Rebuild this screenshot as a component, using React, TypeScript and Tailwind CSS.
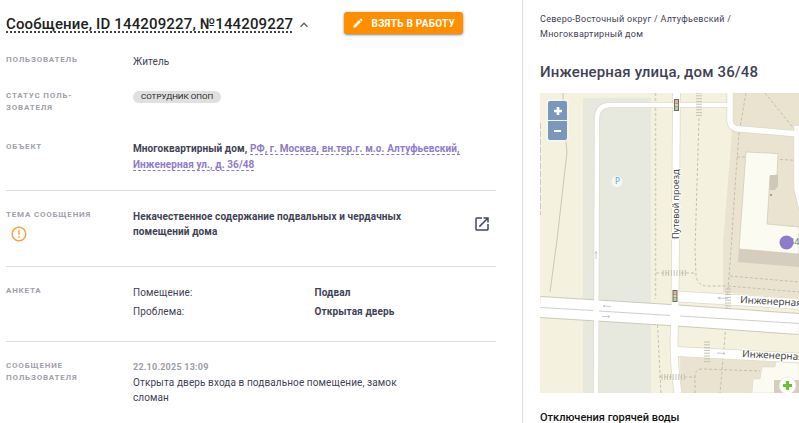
import React from 'react';
import { MdEdit, MdErrorOutline, MdKeyboardArrowUp, MdOpenInNew } from 'react-icons/md';

interface RowProps {
  label: React.ReactNode;
  className?: string;
  children: React.ReactNode;
}

const Row: React.FC<RowProps> = ({ label, className = '', children }) => (
  <div className={`grid grid-cols-[127px_1fr] ${className}`}>
    <dt className="text-[8px] leading-3 font-bold tracking-widest text-[#9fa1aa] uppercase">{label}</dt>
    <dd>{children}</dd>
  </div>
);

const answers = [
  { name: 'Помещение:', value: 'Подвал' },
  { name: 'Проблема:', value: 'Открытая дверь' }
];

// Pedestrian crossings: start point, number of stripes, direction
const crossings = [
  { x: 159, y: 0, count: 9, vertical: true },
  { x: 188, y: 196, count: 8, vertical: true },
  { x: 167, y: 249, count: 8, vertical: true },
  { x: 123, y: 180, count: 9, vertical: false },
  { x: 122, y: 284, count: 9, vertical: false }
];

const TrafficLight: React.FC<{ x: number; y: number }> = ({ x, y }) => (
  <g transform={`translate(${x} ${y})`}>
    <rect x="-2.5" y="-6" width="5" height="12" fill="#6f6b62" />
    <rect x="-1.5" y="-5" width="3" height="3" fill="#e0aea2" />
    <rect x="-1.5" y="-1.5" width="3" height="3" fill="#e3d9a0" />
    <rect x="-1.5" y="2" width="3" height="3" fill="#b2cea2" />
  </g>
);

const MapView: React.FC = () => (
  <svg viewBox="0 0 259 300" preserveAspectRatio="xMinYMin slice" className="block h-full w-full">
    <rect width="259" height="300" fill="#f4f1de" />
    <rect x="43" y="5" width="68" height="295" fill="#e8e9de" />

    {/* Yards */}
    <path d="M191 0H259V206L183 199V150L192 38Z" fill="#e9e3d0" />
    <path d="M140 264L259 270V300H141Z" fill="#e9e3d0" />

    {/* Buildings */}
    <path d="M199 156L259 161V174L198 169Z" fill="#d5cdbe" />
    <path
      d="M206 59L238 60.500L237 82L230 83L227 131L259 134V161L199 156Z"
      fill="#fcfbf2"
      stroke="#cfc8b8"
      strokeWidth="0.7"
    />
    <path d="M230 82H238V93L235 97H229.500Z" fill="#cfc7b8" />
    <circle cx="231" cy="102" r="1" fill="#8c877c" />
    <path d="M236 268L259 270V300H212L213 286H220L222 274H235Z" fill="#fcfbf2" stroke="#ddd6c6" strokeWidth="0.6" />
    <path d="M234 287H259V300H234Z" fill="#d5cdbe" />

    {/* Footpaths */}
    <path d="M23 0L24 30L27 59L17 147L10 199" fill="none" stroke="#cbc8bb" strokeWidth="1" />
    <path d="M0 30V122" stroke="#b9bfcb" strokeWidth="1.500" strokeDasharray="6 2" />
    <path d="M115.500 0V206" stroke="#d3d0be" strokeWidth="1.500" strokeDasharray="3 2" />
    <g fill="none" stroke="#bab5a5" strokeWidth="0.8" strokeDasharray="3 2">
      <path d="M117.500 232L121 300" />
      <path d="M159 25L155 157L156 182Q157 193 168 193L188 193L259 199" />
      <path d="M206 0L199 40L195 94L191 157L188 197L185 244L180 300" />
      <path d="M190 183L259 189" />
      <path d="M225 0L255 37" />
      <path d="M197 64H205M240 66.500L259 67.500" />
      <path d="M116 180H156M119 284H155" />
      <path d="M155 300V284Q155 276 162 276L220 278" />
    </g>

    {/* Roads: edge first, then the surface */}
    <g fill="none" stroke="#dedacb">
      <path d="M56 300L57 26Q57 12 71 12H190" strokeWidth="6" />
      <path d="M136.500 0L135 215L134 248Q134 275 138 300" strokeWidth="8.500" />
      <path d="M190 0V25Q189 36 200 36L259 41M257 33V96L262 116" strokeWidth="7" />
      <path d="M138 203.500L259 211" strokeWidth="11.500" />
      <path d="M137 258.500L259 265" strokeWidth="10.500" />
      <path d="M0 214L130 222L259 231" stroke="#cdcabd" strokeWidth="22" />
    </g>
    <g fill="none" stroke="#fff">
      <path d="M56 300L57 26Q57 12 71 12H190" strokeWidth="4.500" />
      <path d="M138 203.500L259 211" strokeWidth="10" />
      <path d="M137 258.500L259 265" strokeWidth="9" />
      <path d="M0 214L130 222L259 231" strokeWidth="20" />
      <path d="M136.500 0L135 215L134 248Q134 275 138 300" strokeWidth="7" />
      <path d="M190 0V25Q189 36 200 36L259 41M257 33V96L262 116" strokeWidth="5.500" />
    </g>
    <path d="M0 214.500L53 217.500M59 218L130 222.500M140 223L259 230.500" fill="none" stroke="#cfcfcf" strokeWidth="1" />

    {/* Crossings */}
    {crossings.map(({ x, y, count, vertical }) => (
      <g key={`${x}-${y}`} stroke="#c6c2b6" strokeWidth="1">
        {Array.from({ length: count }, (_, i) =>
          vertical ? (
            <path key={i} d={`M${x - 3} ${y + i * 2.8}h6`} />
          ) : (
            <path key={i} d={`M${x + i * 2.8} ${y - 3}v6`} />
          )
        )}
      </g>
    ))}

    {/* One-way arrows */}
    <g fill="none" stroke="#b9c0da" strokeWidth="0.8">
      <path d="M71 213.500L63 213M65 212L63 213L65 214" />
      <path d="M62 223.500H70M68 222.500L70 223.500L68 224.500" />
      <path d="M56 166V158.500M55 160.500L56 158.500L57 160.500" />
      <path d="M188 205.500L178 205M180.500 204L178 205L180.500 206" />
      <path d="M177 260L185 260.500M183 259.500L185 260.500L183 261.500" />
    </g>

    <TrafficLight x={136.5} y={12} />
    <TrafficLight x={135} y={203} />

    <circle cx="77" cy="88.500" r="5.500" fill="#f6f7f2" />
    <text x="77.500" y="91" textAnchor="middle" fontSize="8" fill="#5aa5dc" fontFamily="Noto Sans, sans-serif">
      P
    </text>

    {/* Street names */}
    <g fontSize="10" fill="#444" stroke="#fff" strokeWidth="2" paintOrder="stroke" fontFamily="Noto Sans, sans-serif">
      <text transform="translate(139 146) rotate(-90)" fontSize="9">
        Путевой проезд
      </text>
      <text transform="translate(200 210) rotate(3)">Инженерная</text>
      <text transform="translate(202 264) rotate(3)">Инженерная</text>
    </g>
    <text x="249" y="152" fontSize="9" fill="#777" fontFamily="Noto Sans, sans-serif">
      34
    </text>

    <circle cx="246.500" cy="149.500" r="7" fill="#8f7acb" />
    <circle cx="247.500" cy="292.500" r="8.500" fill="#fff" stroke="#d9d6cc" strokeWidth="0.5" />
    <path d="M247.500 288V297M243 292.500H252" stroke="#6cc22f" strokeWidth="3.200" />
  </svg>
);

const MessageCard: React.FC = () => (
  <section className="border-r border-[#dedede] pt-3 pr-[26px] pl-1.5">
    <header className="flex items-start">
      <h1 className="text-[15px] leading-6 font-medium tracking-[0.01em] whitespace-nowrap text-[#212121]">
        <span className="underline decoration-[#444] decoration-dotted decoration-2 underline-offset-2">
          Сообщение, ID 144209227, №144209227
        </span>
      </h1>
      <button type="button" aria-label="Свернуть" className="mt-[5px] ml-[3px] text-[#666]">
        <MdKeyboardArrowUp size={16} />
      </button>
      <button
        type="button"
        className="mr-[33px] ml-auto flex h-[22px] items-center gap-2 rounded-[3px] bg-[#ff8f00] px-2 text-[10px] font-bold tracking-wide whitespace-nowrap text-white uppercase shadow-sm shadow-black/40"
      >
        <MdEdit size={12} />
        Взять в работу
      </button>
    </header>

    <dl className="mt-[18px] text-[10px] leading-[15px] tracking-[0.01em] text-[#3f4254]">
      <Row label="Пользователь">Житель</Row>
      <Row
        label={
          <>
            Статус поль-
            <br />
            зователя
          </>
        }
        className="mt-[21px]"
      >
        <span className="mt-px block w-fit rounded-full bg-[#e0e0e0] px-2 text-[8px] leading-3 tracking-normal text-[#212121] uppercase">
          Сотрудник ОПОП
        </span>
      </Row>
      <Row label="Объект" className="mt-[27px] pb-[17px]">
        <p className="leading-4 font-bold">
          Многоквартирный дом,{' '}
          <a href="#map" className="border-b border-dashed border-[#8f7acb] text-[#8f7acb]">
            РФ, г. Москва, вн.тер.г. м.о. Алтуфьевский, Инженерная ул., д. 36/48
          </a>
        </p>
      </Row>

      <Row
        label={
          <>
            Тема сообщения
            <MdErrorOutline size={18} className="mt-1 ml-1 text-[#ff9f40]" />
          </>
        }
        className="border-t border-[#dedede] pt-[18px] pb-[23px]"
      >
        <div className="flex items-center justify-between pr-[5px]">
          <p className="max-w-[290px] font-bold">Некачественное содержание подвальных и чердачных помещений дома</p>
          <button type="button" aria-label="Открыть" className="text-[#3f4a5e]">
            <MdOpenInNew size={18} />
          </button>
        </div>
      </Row>

      <Row label="Анкета" className="border-t border-[#dedede] pt-[18px] pb-[18px]">
        {answers.map(item => (
          <div key={item.name} className="grid grid-cols-2 pb-1">
            <span>{item.name}</span>
            <span className="font-bold">{item.value}</span>
          </div>
        ))}
      </Row>

      <Row
        label={
          <>
            Сообщение
            <br />
            пользователя
          </>
        }
        className="border-t border-[#dedede] pt-[18px]"
      >
        <time className="block text-[9px] font-bold tracking-wide text-[#9a9da6]">22.10.2025 13:09</time>
        <p className="max-w-[290px]">Открыта дверь входа в подвальное помещение, замок сломан</p>
      </Row>
    </dl>
  </section>
);

const ObjectPanel: React.FC = () => (
  <aside className="min-w-0 pt-3 pl-[17px]">
    <nav className="max-w-[210px] text-[9px] leading-[15px] tracking-[0.03em] text-[#3f4254]">
      Северо-Восточный округ / Алтуфьевский / Многоквартирный дом
    </nav>
    <h2 className="mt-5 text-[15px] leading-5 font-medium tracking-[0.01em] text-[#3f4254]">Инженерная улица, дом 36/48</h2>

    <div id="map" className="relative mt-[11px] h-[300px] overflow-hidden">
      <MapView />
      <div className="absolute top-1.5 left-1.5 flex flex-col gap-px rounded bg-white/40 p-0.5 text-white">
        <button type="button" aria-label="Приблизить" className="flex size-[19px] items-center justify-center rounded-t-xs bg-[#7b98bc]">
          <svg viewBox="0 0 8 8" className="size-2" fill="currentColor">
            <path d="M2.700 0H5.300V2.700H8V5.300H5.300V8H2.700V5.300H0V2.700H2.700Z" />
          </svg>
        </button>
        <button type="button" aria-label="Отдалить" className="flex size-[19px] items-center justify-center rounded-b-xs bg-[#7b98bc]">
          <svg viewBox="0 0 7 2" className="h-0.5 w-[7px]" fill="currentColor">
            <path d="M0 0H7V2H0Z" />
          </svg>
        </button>
      </div>
    </div>

    <h3 className="mt-[17px] text-[11px] leading-4 font-medium text-[#111]">Отключения горячей воды</h3>
  </aside>
);

export default function App() {
  return (
    <main className="grid min-h-screen grid-cols-[523fr_276fr] overflow-hidden bg-white font-[Roboto,sans-serif]">
      <MessageCard />
      <ObjectPanel />
    </main>
  );
}
